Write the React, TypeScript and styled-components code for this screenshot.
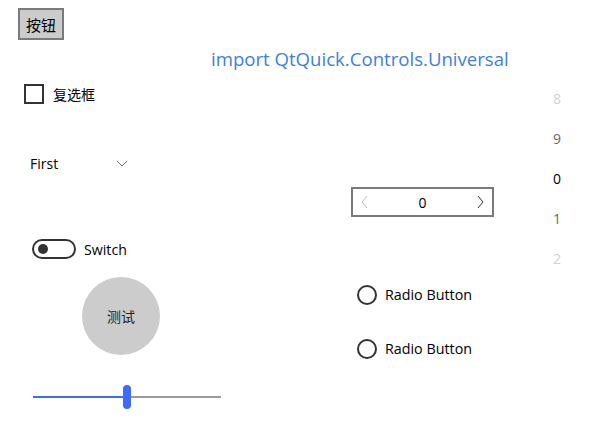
import React from 'react';
import styled, { createGlobalStyle } from 'styled-components';

const GlobalStyle = createGlobalStyle`
  html, body {
    margin: 0;
    padding: 0;
    background: #ffffff;
  }

  body {
    font-family: 'Open Sans', 'Noto Sans CJK SC', sans-serif;
    color: #000000;
  }
`;

const CJK = `'Noto Sans CJK SC', 'Noto Sans', sans-serif`;

const Window = styled.div`
  width: 610px;
  height: 447px;
  overflow: hidden;
  display: flex;
  flex-direction: column;
`;

const TopRow = styled.div`
  height: 40px;
  padding: 8px 0 0 18px;
  box-sizing: border-box;
  display: flex;
  align-items: flex-start;
`;

const PlainButton = styled.button`
  width: 46px;
  height: 32px;
  margin: 0;
  padding: 0;
  box-sizing: border-box;
  background: #cccccc;
  border: 2px solid #7a7a7a;
  font-family: ${CJK};
  font-size: 15px;
  color: #000000;
`;

const Title = styled.div`
  height: 38px;
  line-height: 37px;
  padding-left: 211px;
  font-size: 18.6px;
  color: #3d80e4;
  white-space: nowrap;
`;

const Body = styled.div`
  display: grid;
  grid-template-columns: 340px 200px 1fr;
  align-items: start;
`;

const Column = styled.div`
  display: flex;
  flex-direction: column;
  align-items: flex-start;
`;

const Spaced = styled.div<{ $top: number; $left: number }>`
  margin-top: ${(p) => p.$top}px;
  margin-left: ${(p) => p.$left}px;
`;

const CheckRow = styled.label`
  display: flex;
  align-items: center;
  gap: 9px;
  height: 20px;
  font-family: ${CJK};
  font-size: 14px;
`;

const CheckBoxBox = styled.span`
  width: 20px;
  height: 20px;
  box-sizing: border-box;
  border: 2px solid #333333;
`;

const Combo = styled.div`
  width: 122px;
  height: 32px;
  box-sizing: border-box;
  padding: 0 12px;
  display: flex;
  align-items: center;
  justify-content: space-between;
  font-size: 14px;
`;

const SwitchRow = styled.div`
  display: flex;
  align-items: center;
  gap: 8px;
  height: 20px;
  font-size: 14.2px;
`;

const SwitchTrack = styled.span`
  width: 44px;
  height: 20px;
  box-sizing: border-box;
  border: 2px solid #333333;
  border-radius: 10px;
  display: flex;
  align-items: center;
  padding-left: 4px;
`;

const SwitchKnob = styled.span`
  width: 10px;
  height: 10px;
  border-radius: 50%;
  background: #333333;
`;

const RoundButton = styled.div`
  width: 78px;
  height: 78px;
  border-radius: 50%;
  background: #cccccc;
  display: flex;
  align-items: center;
  justify-content: center;
  font-family: ${CJK};
  font-size: 14px;
  color: #222222;
`;

const SliderTrack = styled.div`
  width: 188px;
  height: 24px;
  display: flex;
  align-items: center;
`;

const SliderPart = styled.span<{ $fill: string; $width: number }>`
  width: ${(p) => p.$width}px;
  height: 2px;
  background: ${(p) => p.$fill};
`;

const SliderHandle = styled.span`
  width: 8px;
  height: 24px;
  border-radius: 4px;
  background: #3e6bff;
`;

const SpinBox = styled.div`
  width: 143px;
  height: 30px;
  box-sizing: border-box;
  border: 2px solid #7a7a7a;
  display: flex;
  align-items: center;
  justify-content: space-between;
  padding: 0 8px;
  font-size: 14px;
`;

const SpinValue = styled.span`
  flex: 1;
  text-align: center;
`;

const RadioRow = styled.div`
  display: flex;
  align-items: center;
  gap: 8px;
  height: 20px;
  line-height: 18px;
  font-size: 14.3px;
`;

const RadioCircle = styled.span`
  width: 20px;
  height: 20px;
  box-sizing: border-box;
  border: 2px solid #333333;
  border-radius: 50%;
`;

const Tumbler = styled.div`
  width: 34px;
  margin-top: 1px;
  display: flex;
  flex-direction: column;
`;

const TumblerItem = styled.div<{ $shade: string }>`
  height: 40px;
  line-height: 40px;
  text-align: center;
  font-size: 14px;
  color: ${(p) => p.$shade};
`;

const Chevron: React.FC<{ dir: 'down' | 'left' | 'right'; color: string }> = ({ dir, color }) => {
  const paths = {
    down: 'M1 1 L6 6 L11 1',
    left: 'M6 1 L1 7 L6 13',
    right: 'M1 1 L6 7 L1 13',
  };
  const size = dir === 'down' ? { w: 12, h: 7 } : { w: 7, h: 14 };

  return (
    <svg width={size.w} height={size.h} viewBox={`0 0 ${size.w} ${size.h}`}>
      <path d={paths[dir]} fill='none' stroke={color} strokeWidth={1} />
    </svg>
  );
};

const tumblerItems = [
  { label: '8', shade: '#d2d2d2' },
  { label: '9', shade: '#6a6a6a' },
  { label: '0', shade: '#000000' },
  { label: '1', shade: '#6a6a6a' },
  { label: '2', shade: '#d2d2d2' },
];

export default function App () {
  return (
    <Window>
      <GlobalStyle />
      <TopRow>
        <PlainButton>按钮</PlainButton>
      </TopRow>
      <Title>import QtQuick.Controls.Universal</Title>
      <Body>
        <Column>
          <Spaced $left={24} $top={6}>
            <CheckRow>
              <CheckBoxBox />
              复选框
            </CheckRow>
          </Spaced>
          <Spaced $left={18} $top={43}>
            <Combo>
              <span>First</span>
              <Chevron color='#777777' dir='down' />
            </Combo>
          </Spaced>
          <Spaced $left={32} $top={60}>
            <SwitchRow>
              <SwitchTrack>
                <SwitchKnob />
              </SwitchTrack>
              Switch
            </SwitchRow>
          </Spaced>
          <Spaced $left={82} $top={18}>
            <RoundButton>测试</RoundButton>
          </Spaced>
          <Spaced $left={33} $top={30}>
            <SliderTrack>
              <SliderPart $fill='#3e6bff' $width={90} />
              <SliderHandle />
              <SliderPart $fill='#999999' $width={90} />
            </SliderTrack>
          </Spaced>
        </Column>
        <Column>
          <Spaced $left={11} $top={109}>
            <SpinBox>
              <Chevron color='#bbbbbb' dir='left' />
              <SpinValue>0</SpinValue>
              <Chevron color='#333333' dir='right' />
            </SpinBox>
          </Spaced>
          <Spaced $left={17} $top={68}>
            <RadioRow>
              <RadioCircle />
              Radio Button
            </RadioRow>
          </Spaced>
          <Spaced $left={17} $top={34}>
            <RadioRow>
              <RadioCircle />
              Radio Button
            </RadioRow>
          </Spaced>
        </Column>
        <Column>
          <Tumbler>
            {tumblerItems.map((item) => (
              <TumblerItem $shade={item.shade} key={item.label}>
                {item.label}
              </TumblerItem>
            ))}
          </Tumbler>
        </Column>
      </Body>
    </Window>
  );
}
